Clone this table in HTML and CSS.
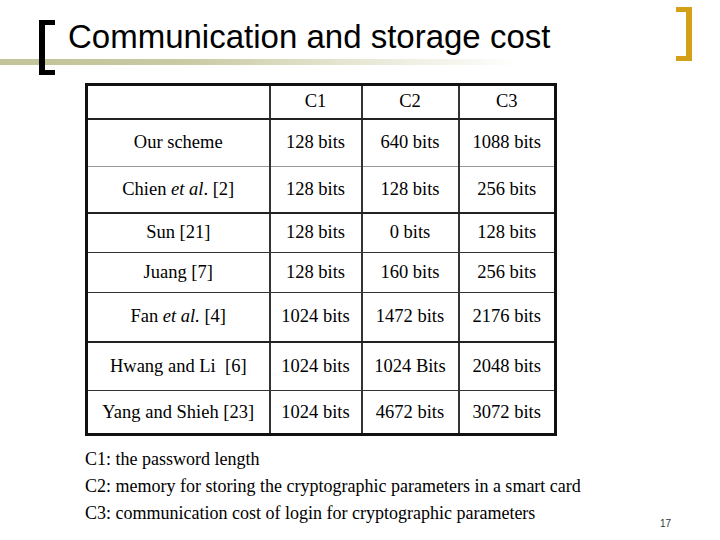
FILE: index.html
```html
<!DOCTYPE html>
<html>
<head>
<meta charset="utf-8">
<link rel="stylesheet" href="styles.css">
</head>
<body>
<div class="slide">
  <header class="head">
    <div class="rule"></div>
    <div class="bracket-left"></div>
    <div class="bracket-right"></div>
    <h1 class="title">Communication and storage cost</h1>
  </header>
  <main class="content">
    <table class="cost">
      <colgroup>
        <col class="c0"><col class="c1"><col class="c2"><col class="c3">
      </colgroup>
      <tr class="r-h"><td></td><td>C1</td><td>C2</td><td>C3</td></tr>
      <tr class="r1"><td>Our scheme</td><td>128 bits</td><td>640 bits</td><td>1088 bits</td></tr>
      <tr class="r2"><td>Chien <i>et al</i>. [2]</td><td>128 bits</td><td>128 bits</td><td>256 bits</td></tr>
      <tr class="r3"><td>Sun [21]</td><td>128 bits</td><td>0 bits</td><td>128 bits</td></tr>
      <tr class="r4"><td>Juang [7]</td><td>128 bits</td><td>160 bits</td><td>256 bits</td></tr>
      <tr class="r5"><td>Fan <i>et al.</i> [4]</td><td>1024 bits</td><td>1472 bits</td><td>2176 bits</td></tr>
      <tr class="r6"><td>Hwang and Li&nbsp; [6]</td><td>1024 bits</td><td>1024 Bits</td><td>2048 bits</td></tr>
      <tr class="r7"><td>Yang and Shieh [23]</td><td>1024 bits</td><td>4672 bits</td><td>3072 bits</td></tr>
    </table>
    <ul class="legend">
      <li>C1: the password length</li>
      <li>C2: memory for storing the cryptographic parameters in a smart card</li>
      <li>C3: communication cost of login for cryptographic parameters</li>
    </ul>
  </main>
  <div class="page-num">17</div>
</div>
</body>
</html>
```

FILE: styles.css
```css
* { box-sizing: border-box; }
html, body { margin: 0; padding: 0; background: #ffffff; }
.slide {
  width: 720px;
  height: 540px;
  position: relative;
  overflow: hidden;
  background: #ffffff;
}
.head {
  position: relative;
  height: 83px;
}
.rule {
  position: absolute;
  left: 0;
  top: 59px;
  width: 520px;
  height: 6px;
  background: linear-gradient(to right, #c4c49a 0%, #c9c9a2 35%, #e4e4cf 65%, #ffffff 100%);
}
.bracket-left {
  position: absolute;
  left: 39px;
  top: 20px;
  width: 16px;
  height: 55px;
  border: 5px solid #000000;
  border-left-width: 6px;
  border-right: none;
}
.bracket-right {
  position: absolute;
  left: 676px;
  top: 7px;
  width: 16px;
  height: 54px;
  border: 5px solid #d4a017;
  border-right-width: 6px;
  border-left: none;
}
.title {
  position: relative;
  margin: 0;
  padding: 17px 0 0 68px;
  font-family: "Liberation Sans", Arial, sans-serif;
  font-weight: normal;
  font-size: 33px;
  line-height: 40px;
  color: #000000;
}
.content {
  padding-left: 85px;
}
.cost {
  border-collapse: collapse;
  border: 3px solid #111111;
  font-family: "Liberation Serif", "Times New Roman", serif;
  font-size: 18.5px;
  color: #000000;
  table-layout: fixed;
  width: 469px;
}
.c0 { width: 183px; }
.c1 { width: 92px; }
.c2 { width: 97px; }
.c3 { width: 97px; }
.cost td {
  text-align: center;
  vertical-align: middle;
  border: 1px solid #333333;
  border-left-width: 2px;
  padding: 0;
}
.cost tr.r-h td { border-bottom: 2px solid #222222; }
.r-h { height: 34px; }
.r1 { height: 48px; }
.r2 { height: 46px; }
.r3 { height: 40px; }
.r4 { height: 40px; }
.r5 { height: 49px; }
.r6 { height: 49px; }
.r7 { height: 44px; }
.cost tr.r1 td { border-bottom: 1px solid #999999; }
.cost tr.r2 td { border-bottom: 2px solid #222222; }
.cost tr.r5 td { border-bottom: 2px solid #222222; }
.legend {
  list-style: none;
  margin: 10px 0 0 0;
  padding: 0;
  font-family: "Liberation Serif", "Times New Roman", serif;
  font-size: 18px;
  line-height: 27px;
  color: #000000;
}
.page-num {
  position: absolute;
  left: 660px;
  top: 518px;
  font-family: "Liberation Sans", Arial, sans-serif;
  font-size: 10px;
  color: #333333;
}
```
